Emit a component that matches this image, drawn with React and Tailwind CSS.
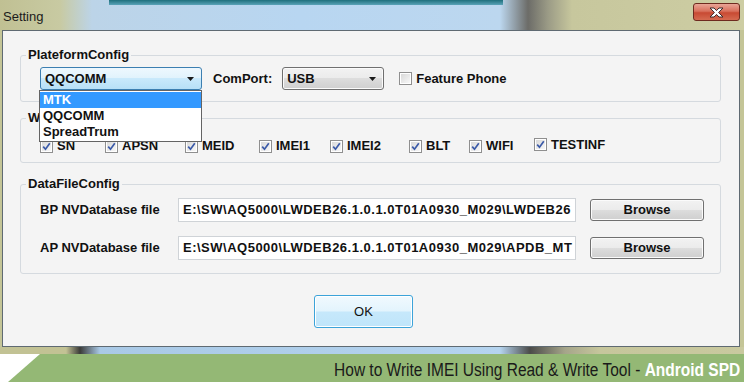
import React from "react";

/* ---------- SMALL PIECES ---------- */

function CheckBox({ checked }) {
   return (
      <span className="w-[13px] h-[13px] shrink-0 border border-[#8f8f8f] bg-white p-[1px]">
         <span className="w-full h-full flex items-center justify-center bg-[linear-gradient(135deg,#d9d9d9,#f7f7f7)]">
            {checked && (
               <svg width="9" height="9" viewBox="0 0 9 9">
                  <path
                     d="M1.2 4.6 L3.5 7.2 L7.8 1.2"
                     fill="none"
                     stroke="#3b5aa8"
                     strokeWidth="1.7"
                  />
               </svg>
            )}
         </span>
      </span>
   );
}

function Arrow() {
   return (
      <svg width="7" height="4" viewBox="0 0 7 4">
         <path d="M0 0 H7 L3.5 4 Z" fill="#1a1a1a" />
      </svg>
   );
}

const grayBtn =
   "border border-[#707070] rounded-[3px] bg-[linear-gradient(#f2f2f2_0%,#ebebeb_50%,#dddddd_50%,#cfcfcf_100%)] shadow-[inset_0_0_0_1px_#fbfbfb]";

const flags = [
   { label: "SN", w: "w-[65px]" },
   { label: "APSN", w: "w-[80px]" },
   { label: "MEID", w: "w-[74px]" },
   { label: "IMEI1", w: "w-[71px]" },
   { label: "IMEI2", w: "w-[79px]" },
   { label: "BLT", w: "w-[60px]" },
   { label: "WIFI", w: "w-[65px]" },
   { label: "TESTINF", w: "w-[90px] -mt-[3px]" },
];

const files = [
   {
      label: "BP NVDatabase file",
      path: "E:\\SW\\AQ5000\\LWDEB26.1.0.1.0T01A0930_M029\\LWDEB26",
   },
   {
      label: "AP NVDatabase file",
      path: "E:\\SW\\AQ5000\\LWDEB26.1.0.1.0T01A0930_M029\\APDB_MT",
   },
];

/* ---------- MAIN ---------- */

export default function App() {
   return (
      <div className="w-[744px] h-[382px] overflow-hidden bg-white font-['Liberation_Sans',Arial,sans-serif] text-[#111]">
         {/* Title bar */}
         <div className="relative h-[30px] flex items-start justify-between bg-[linear-gradient(90deg,#c0c093_0px,#c8caa2_60px,#bcd4e8_92px,#b8d6f1_300px,#bcd7ef_500px,#6c6c68_528px,#9b9b86_548px,#c7c79d_572px,#cdcda3_744px)]">
            <div className="absolute top-0 left-[109px] w-[394px] h-[5px] bg-[linear-gradient(#1f6f7c,#5aa3b8)]" />
            <span className="mt-[9px] ml-[3px] text-[13px] leading-[16px] text-[#1b1b1b]">
               Setting
            </span>
            <button className="mt-[3px] mr-[4px] w-[47px] h-[18px] flex items-center justify-center rounded-[3px] border border-[#6e2a1f] bg-[linear-gradient(#e9a596_0%,#d8705c_45%,#c84a33_55%,#d56a50_100%)]">
               <svg width="15" height="11" viewBox="0 0 15 11">
                  <path
                     d="M1 1 H5 L7.5 3.6 L10 1 H14 L9.6 5.5 L14 10 H10 L7.5 7.4 L5 10 H1 L5.4 5.5 Z"
                     fill="#ffffff"
                     stroke="#3a2a2a"
                     strokeWidth="1"
                     strokeLinejoin="round"
                  />
               </svg>
            </button>
         </div>

         {/* Dialog body */}
         <div className="h-[317px] pl-[2px] pr-[4px] bg-[#c4c597]">
            <div className="h-full border border-[#5f6a72] bg-[#f4f4f4] text-[13px] font-bold">
               {/* PlateformConfig */}
               <fieldset className="mt-[16px] ml-[17px] w-[701px] border border-[#d5dadf] rounded-[3px] pb-[11px]">
                  <legend className="ml-[5px] px-[2px] leading-[16px]">
                     PlateformConfig
                  </legend>
                  <div className="pt-[4px] pl-[19px] flex items-center">
                     <div className="relative">
                        <div className="w-[162px] h-[23px] px-[4px] flex items-center justify-between border border-[#3c7fb1] rounded-[3px] bg-[linear-gradient(#eef8fe_0%,#e0f2fc_50%,#c9e9fb_50%,#b7e0f7_100%)]">
                           <span>QQCOMM</span>
                           <span className="mr-[3px]">
                              <Arrow />
                           </span>
                        </div>
                        <div className="absolute top-[23px] -left-[1px] z-10 w-[163px] border border-[#646464] bg-white leading-[16px] py-[1px]">
                           <div className="px-[3px] bg-[#3399ff] text-white">MTK</div>
                           <div className="px-[3px]">QQCOMM</div>
                           <div className="px-[3px]">SpreadTrum</div>
                        </div>
                     </div>
                     <span className="ml-[11px]">ComPort:</span>
                     <div
                        className={`ml-[10px] w-[102px] h-[23px] px-[4px] flex items-center justify-between ${grayBtn}`}
                     >
                        <span>USB</span>
                        <span className="mr-[3px]">
                           <Arrow />
                        </span>
                     </div>
                     <span className="ml-[15px] flex items-center gap-[4px]">
                        <CheckBox checked={false} />
                        Feature Phone
                     </span>
                  </div>
               </fieldset>

               {/* WriteConfig */}
               <fieldset className="mt-[8px] ml-[17px] w-[701px] border border-[#d5dadf] rounded-[3px] pb-[8px]">
                  <legend className="ml-[5px] px-[2px] leading-[16px]">
                     WriteConfig
                  </legend>
                  <div className="pt-[12px] pl-[19px] flex items-center">
                     {flags.map((f) => (
                        <span
                           key={f.label}
                           className={`${f.w} h-[16px] flex items-center gap-[4px]`}
                        >
                           <CheckBox checked />
                           {f.label}
                        </span>
                     ))}
                  </div>
               </fieldset>

               {/* DataFileConfig */}
               <fieldset className="mt-[13px] ml-[17px] w-[701px] border border-[#d5dadf] rounded-[3px] pb-[13px]">
                  <legend className="ml-[5px] px-[2px] leading-[16px]">
                     DataFileConfig
                  </legend>
                  <div className="pt-[6px] pl-[19px] flex flex-col gap-[14px]">
                     {files.map((f) => (
                        <div key={f.label} className="flex items-center">
                           <span className="w-[138px]">{f.label}</span>
                           <div className="w-[398px] h-[24px] px-[4px] flex items-center border border-[#cfd3d7] bg-white overflow-hidden whitespace-nowrap tracking-[0.5px]">
                              {f.path}
                           </div>
                           <button
                              className={`ml-[14px] w-[114px] h-[22px] flex items-center justify-center ${grayBtn}`}
                           >
                              Browse
                           </button>
                        </div>
                     ))}
                  </div>
               </fieldset>

               {/* OK */}
               <button className="mt-[21px] ml-[311px] w-[99px] h-[33px] flex items-center justify-center border border-[#3ca3d9] rounded-[3px] bg-[linear-gradient(#f1f9fe_0%,#e3f4fd_48%,#c6e8fb_52%,#bfe5fa_100%)] shadow-[inset_0_0_0_1px_#ffffff] font-normal">
                  OK
               </button>
            </div>
         </div>

         {/* Strip under the dialog */}
         <div className="h-[7px] bg-[linear-gradient(90deg,#c2c294_0px,#c2c294_66px,#3b3b39_80px,#a9c9e6_100px,#b5d4ef_500px,#4b4b49_530px,#a5a58a_565px,#c6c69c_600px,#c9c99f_744px)]" />

         {/* Banner */}
         <div className="h-[28px] bg-white">
            <div className="h-full flex items-end justify-end pr-[4px] bg-[#94b875] [clip-path:polygon(40px_0,100%_0,100%_100%,8px_100%)] overflow-hidden">
               <span className="text-[18px] leading-[22px] whitespace-nowrap text-[#1a1a1a] origin-right scale-x-[0.86] -translate-y-[1px]">
                  How to Write IMEI Using Read &amp; Write Tool -{" "}
                  <span className="font-bold text-white">Android SPD</span>
               </span>
            </div>
         </div>
      </div>
   );
}
